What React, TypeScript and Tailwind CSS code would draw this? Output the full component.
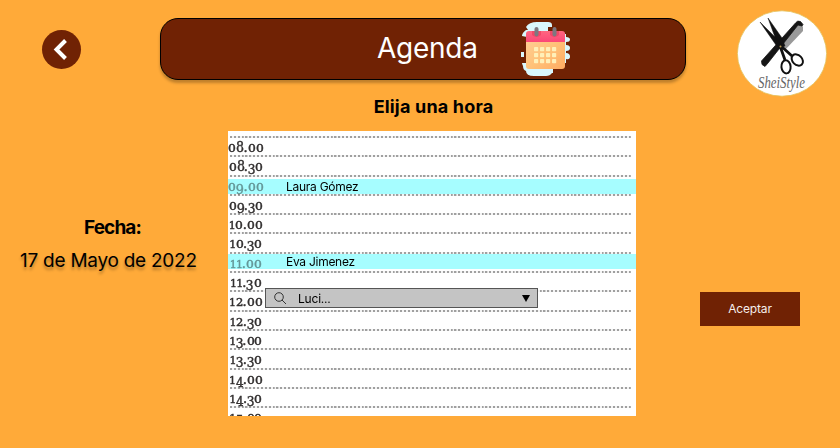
const times = [
  "08.00", "08.30", "09.00", "09.30", "10.00", "10.30", "11.00", "11.30",
  "12.00", "12.30", "13.00", "13.30", "14.00", "14.30", "15.00",
];

// Old-style figures: small 0-2, ascending 8, descending 3, 4, 5 and 9.
const figure: Record<string, string> = {
  "0": "w-[7.9px] text-[11px] scale-x-[1.12]",
  "1": "w-[6.2px] text-[11px]",
  "2": "w-[7.4px] text-[11px] scale-x-[1.05]",
  "3": "w-[7.2px] text-[13.5px] translate-y-[2.5px] scale-x-[0.9]",
  "4": "w-[7.8px] text-[13.5px] translate-y-[2.5px] scale-x-[0.9]",
  "5": "w-[7.2px] text-[13.5px] translate-y-[2.5px] scale-x-[0.9]",
  "8": "w-[7.8px] text-[14px] scale-x-[0.9]",
  "9": "w-[7.8px] text-[13.5px] translate-y-[2.5px] scale-x-[0.95]",
  ".": "w-[3.6px] text-[13px] -translate-x-[0.4px]",
};

function Time({ value }: { value: string }) {
  return (
    <span className="flex h-[17.3px] w-[36px] items-baseline justify-center font-['DejaVu_Serif',serif] leading-[19px] text-[#333030] [-webkit-text-stroke:0.45px_#333030]">
      {value.split("").map((c, i) => (
        <span key={i} className={`flex justify-center ${figure[c]}`}>{c}</span>
      ))}
    </span>
  );
}

function Dots() {
  return <div className="ml-[2px] h-[2px] w-[401px] bg-[repeating-linear-gradient(90deg,#a0a0a0_0px,#a0a0a0_1.8px,#f4f4f4_2.2px,#f4f4f4_3.87px)]" />;
}

function Booking({ name, className }: { name: string; className: string }) {
  return (
    <div className={`absolute left-0 flex h-[15px] w-full items-center ${className}`}>
      <div className="absolute inset-0 bg-[#a6fdff] mix-blend-multiply" />
      <div className="absolute inset-0 bg-[#a6fdff]/50" />
      <span className="relative pl-[58px] text-[12px] leading-[15px] tracking-[-0.27px] text-black">{name}</span>
    </div>
  );
}

function CalendarIcon() {
  return (
    <svg className="h-[56px] w-[52px]" viewBox="519 20 52 56">
      <defs>
        <linearGradient id="page" x1="0" y1="0" x2="1" y2="1">
          <stop offset="0" stopColor="#ffd09a" /><stop offset=".55" stopColor="#ffc178" /><stop offset="1" stopColor="#ffab62" />
        </linearGradient>
        <linearGradient id="top" x1="0" y1="0" x2="0" y2="1">
          <stop offset="0" stopColor="#ff6680" /><stop offset="1" stopColor="#fb4777" />
        </linearGradient>
      </defs>
      <path fill="#d9f7fd" d="M522 36q0-3 4-6h2l-2-3q3-5 11-5h11q4 0 4 3v2h-4v4h14v3h4v3q4 0 4 2.500t-4 2.500v3q4 0 4 3t-4 3v2q4 0 4 3.500t-4 2.500v4h-13v10h-1q-2 3-6 3h-12q-8 0-8-5-3-1-3-5-1-2-1-3h5V37ZM521 52h3v5h-3z" />
      <rect x="526" y="32" width="39" height="37" rx="3" fill="url(#page)" />
      <path fill="url(#top)" d="M526 42v-8q0-3 3-3h33q3 0 3 3v8z" />
      <path fill="#eb3e5e" opacity=".7" d="M532 31h9v4q-4.500 4-9 0zM550 31h9v4q-4.500 4-9 0z" />
      <g fill="#7d7880"><rect x="534.5" y="27" width="4" height="9.500" rx="2" /><rect x="552.5" y="27" width="4" height="9.500" rx="2" /></g>
      <g fill="#fff0b9">
        {[47, 53, 59].map((y) => [534, 540, 546, 552].map((x) => <rect key={`${x}-${y}`} x={x} y={y} width="4.2" height="4.2" rx=".8" />))}
      </g>
    </svg>
  );
}

function Logo() {
  return (
    <svg className="h-[88px] w-[92px]" viewBox="736 9 92 88">
      <ellipse cx="782" cy="53.500" rx="44.6" ry="42.7" fill="#fff" stroke="#e5c15a" strokeWidth=".8" />
      <path d="M783 39l13-15 5-1 2 4v4l-18 19z" fill="#999" />
      <path d="M761.500 61l34-38q2-3 5-1.500l2.500 3-1 1.500-4-1-30 38-3 3.500-3-2z" fill="#151515" stroke="#151515" strokeWidth=".8" />
      <path d="M760 22l17 17 6 7-2 3-5-4zM768 18l14 20 3 8-4 2-5-8z" fill="#111" stroke="#111" strokeWidth=".5" />
      <path d="M780 46l5 14M781 46l11 10" stroke="#111" strokeWidth="2.8" fill="none" />
      <ellipse cx="786" cy="66.800" rx="4.600" ry="6.600" transform="rotate(-5 786 66.800)" fill="none" stroke="#111" strokeWidth="2" />
      <ellipse cx="797.300" cy="60" rx="4.800" ry="6.400" transform="rotate(-45 797.300 60)" fill="none" stroke="#111" strokeWidth="2" />
      <circle cx="780.5" cy="46.500" r="1" fill="#bc9b50" />
      <text x="758" y="87.500" textLength="47" lengthAdjust="spacingAndGlyphs" className="fill-[#666] font-['Liberation_Serif',serif] text-[16px] italic">SheiStyle</text>
    </svg>
  );
}

export default function App() {
  return (
    <div className="h-[448px] w-[840px] overflow-hidden bg-[#ffaa39] font-['Inter',sans-serif] text-black">
      <header className="flex h-[97px] items-start">
        <button aria-label="Volver" className="ml-[42px] mt-[30px] flex h-[39px] w-[39px] items-center justify-center rounded-full bg-[#702204]">
          <svg className="h-[39px] w-[39px]" viewBox="0 0 39 39"><path d="M23.5 10.500l-9 9 9 9" fill="none" stroke="#fff" strokeWidth="4" /></svg>
        </button>
        <div className="ml-[79px] mt-[18px] flex h-[62px] w-[526px] items-start rounded-[18px] border border-black bg-[#702204] shadow-[0_3px_3px_rgba(0,0,0,0.25)]">
          <h1 className="ml-[216px] mt-[12px] w-[142px] whitespace-nowrap text-[28px] leading-[34px] tracking-[-0.25px] text-white">Agenda</h1>
          <div className="mt-[1px]"><CalendarIcon /></div>
        </div>
        <div className="ml-[50px] mt-[9px]"><Logo /></div>
      </header>
      <h2 className="ml-[228px] h-[34px] w-[411px] text-center text-[18px] font-bold leading-[20px] tracking-[0.18px]">Elija una hora</h2>
      <main className="flex h-[285px]">
        <section className="w-[228px] pt-[85px]">
          <p className="ml-[84px] whitespace-nowrap text-[19px] font-bold leading-[24px] tracking-[-0.9px]">Fecha:</p>
          <p className="ml-[20px] mt-[9px] whitespace-nowrap text-[19px] leading-[24px] tracking-[-0.25px] [text-shadow:0_3px_3px_rgba(0,0,0,0.3)]">17 de Mayo de 2022</p>
        </section>
        <section className="relative isolate h-[285px] w-[408px] overflow-hidden bg-white pt-[5px]">
          {times.map((t) => (
            <div key={t} className="h-[19.3px]"><Dots /><Time value={t} /></div>
          ))}
          <Booking name="Laura Gómez" className="top-[48px]" />
          <Booking name="Eva Jimenez" className="top-[123px]" />
          <div className="absolute left-[37px] top-[157px] flex h-[20px] w-[273px] items-center border border-[#555] bg-[#c4c4c4]">
            <svg className="ml-[8px] h-[13px] w-[13px]" viewBox="0 0 13 13" fill="none" stroke="#222" strokeWidth=".9"><circle cx="5" cy="5" r="4.3" /><path d="M8 8l4 4" /></svg>
            <span className="ml-[11px] text-[12px] leading-[15px] tracking-[-0.2px]">Luci...</span>
            <svg className="ml-auto mr-[7px] h-[7px] w-[8px]" viewBox="0 0 8 7"><path d="M0 0h8L4 7z" /></svg>
          </div>
        </section>
        <section className="pl-[64px] pt-[161px]">
          <button className="h-[34px] w-[100px] bg-[#702204] text-[12px] tracking-[-0.15px] text-[#f5eeeb]">Aceptar</button>
        </section>
      </main>
    </div>
  );
}
